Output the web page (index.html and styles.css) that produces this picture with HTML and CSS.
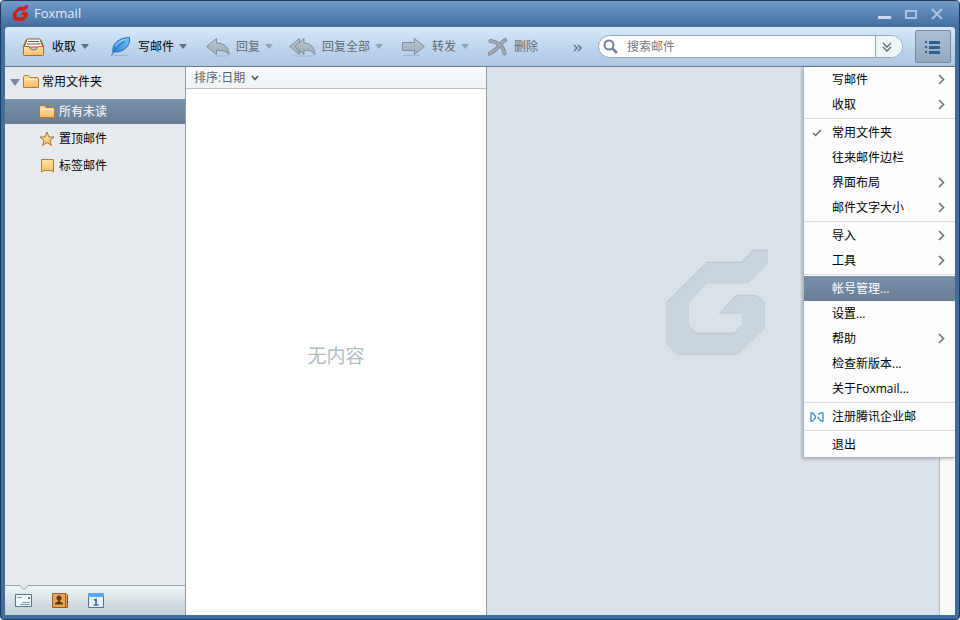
FILE: index.html
```html
<!DOCTYPE html>
<html lang="zh-CN">
<head>
<meta charset="utf-8">
<meta name="viewport" content="width=device-width, initial-scale=1">
<title>Foxmail</title>
<link rel="stylesheet" href="styles.css">
</head>
<body>
<svg class="defs" width="0" height="0" aria-hidden="true">
  <defs>
    <linearGradient id="gold" x1="0" y1="0" x2="0" y2="1"><stop offset="0" stop-color="#ffe2a8"/><stop offset="1" stop-color="#f5bd68"/></linearGradient>
    <linearGradient id="grey" x1="0" y1="0" x2="0" y2="1"><stop offset="0" stop-color="#b9c6cf"/><stop offset="1" stop-color="#9dacb8"/></linearGradient>
    <linearGradient id="blue" x1="1" y1="0" x2="0" y2="1"><stop offset="0" stop-color="#7cc4f8"/><stop offset="1" stop-color="#2f85d8"/></linearGradient>
    <symbol id="folder" viewBox="0 0 16 14"><path d="M.5 12.500V2.500Q.5.5 2 .5H5.500L7 2.500H14Q15.500 2.500 15.500 4V12.500Z" fill="url(#gold)" stroke="#b87830"/><path d="M1.500 4.500H14.500" stroke="#ffefc8"/></symbol>
    <symbol id="arrow" viewBox="0 0 7 11"><path d="M1 1L5.500 5.500L1 10" fill="none" stroke="#70757a" stroke-width="1.700"/></symbol>
  </defs>
</svg>
<div class="window">
  <header class="titlebar">
    <svg class="logo" width="15" height="16" viewBox="74 56 311 323"><path fill="#d81e10" stroke="#d81e10" stroke-width="12" d="M200 97H303L338 61H381V103L323 161H200L144 217V286L168 310H280L306 285V252H234L288 196H346L372 217V296L292 375H111L78 342V217Z"/></svg>
    <h1 class="app-name">Foxmail</h1>
    <div class="controls">
      <button type="button" aria-label="最小化"><svg width="14" height="12" viewBox="0 0 14 12"><path d="M1 9.500H14" stroke="#c6d9ee" stroke-width="3"/></svg></button>
      <button type="button" aria-label="最大化"><svg width="12" height="12" viewBox="0 0 12 12"><path d="M1 3H11V10H1Z" fill="none" stroke="#a9c4e2" stroke-width="2"/></svg></button>
      <button type="button" aria-label="关闭"><svg width="12" height="12" viewBox="0 0 12 12"><path d="M1 1L11 11M11 1L1 11" stroke="#a9c4e2" stroke-width="2"/></svg></button>
    </div>
  </header>

  <div class="client">
    <div class="toolbar">
      <div class="tools">
        <button type="button" class="tool">
          <svg width="24" height="20" viewBox="0 0 24 20"><path d="M5 2H18L21 10H2Z" fill="#fff" stroke="#8a5a35"/><path d="M6 4.500H17M5 7H18.500" stroke="#79503a"/><path d="M1.500 9.500L4.500 3M21.500 9.500L18.500 3" stroke="#9a6534" stroke-width="1.500"/><path d="M1.500 9.500H7Q8 13 11.500 13T16 9.500H21.500V17.500Q21.500 18.500 20.500 18.500H2.500Q1.500 18.500 1.500 17.500Z" fill="url(#gold)" stroke="#a96b2c"/></svg>
          <span>收取</span><i class="caret"></i>
        </button>
        <button type="button" class="tool">
          <svg width="24" height="20" viewBox="0 0 24 20"><path d="M5 18.500H20" stroke="#8aa6c4" opacity=".6"/><path d="M5 15C4 9 8 1 21.500.5C22.500 7 18 14 9 15L6.500 15Z" fill="url(#blue)" stroke="#2470b8"/><path d="M17 4.500Q9 8 3.500 18.500" fill="none" stroke="#1d5fa8"/><path d="M7.500 9Q10 4 17 2.500" fill="none" stroke="#a2d6fa"/></svg>
          <span>写邮件</span><i class="caret"></i>
        </button>
        <button type="button" class="tool" disabled>
          <svg width="24" height="20" viewBox="0 0 24 20"><path d="M6 19H22" stroke="#8fa2b5" opacity=".5"/><path d="M.7 9.500L10.500 1.500V6C19 6 22.500 11 23 17.500C20 14 16 13 10.500 13.500V17.500Z" fill="url(#grey)" stroke="#818d98"/></svg>
          <span>回复</span><i class="caret"></i>
        </button>
        <button type="button" class="tool" disabled>
          <svg class="wide" width="28" height="20" viewBox="0 0 28 20"><path d="M5 19H26" stroke="#8fa2b5" opacity=".5"/><path d="M1.700 9.500L11.500 1.500V17.500Z" fill="url(#grey)" stroke="#818d98"/><path d="M6.700 9.500L16 1.500V6C23 6 26.500 11 27 17.500C24 14 21 13 16 13.500V17.500Z" fill="url(#grey)" stroke="#818d98"/></svg>
          <span>回复全部</span><i class="caret"></i>
        </button>
        <button type="button" class="tool" disabled>
          <svg width="24" height="20" viewBox="0 0 24 20"><path d="M1 18.500H18" stroke="#8fa2b5" opacity=".5"/><path d="M.5 5.500H12.500V1.500L22.500 9.500L12.500 17.500V13.500H.5Z" fill="url(#grey)" stroke="#818d98"/></svg>
          <span>转发</span><i class="caret"></i>
        </button>
        <button type="button" class="tool" disabled>
          <svg width="20" height="20" viewBox="0 0 20 20" fill="none" stroke-linecap="round"><path d="M2.500 4C9 5 15.500 9 16.500 16.500M17 3C13 5 10 13 1.500 16.500" stroke="#7d8993" stroke-width="4"/><path d="M2.500 4C9 5 15.500 9 16.500 16.500M17 3C13 5 10 13 1.500 16.500" stroke="#9daab4" stroke-width="2.400"/></svg>
          <span>删除</span>
        </button>
      </div>
      <button type="button" class="more" aria-label="更多"><svg width="10" height="8" viewBox="0 0 10 8"><path d="M1 1L4 4L1 7M5 1L8 4L5 7" fill="none" stroke="#66778e" stroke-width="1.500"/></svg></button>
      <form class="search" role="search">
        <label for="q" aria-label="搜索邮件"><svg width="16" height="16" viewBox="0 0 16 16"><circle cx="6" cy="6" r="4.500" fill="none" stroke="#71829f" stroke-width="2"/><path d="M9.500 9.500L14 14" stroke="#71829f" stroke-width="2.500"/></svg></label>
        <input id="q" type="text" placeholder="搜索邮件">
        <button type="button" aria-label="搜索选项"><svg width="10" height="10" viewBox="0 0 10 10"><path d="M1 1L5 5L9 1M1 5L5 9L9 5" fill="none" stroke="#626a70" stroke-width="1.300"/></svg></button>
      </form>
      <div class="menu-anchor">
        <button type="button" class="menu-button" aria-label="主菜单" aria-expanded="true"><svg width="16" height="13" viewBox="0 0 16 13" fill="#315f8f"><path d="M0 0H2V2H0ZM4 0H15V3H4ZM0 5H2V7H0ZM4 5H15V8H4ZM0 10H2V12H0ZM4 10H15V13H4Z"/></svg></button>
        <div class="menu" role="menu">
          <button type="button" role="menuitem"><span>写邮件</span><svg class="sub" width="7" height="11"><use href="#arrow"/></svg></button>
          <button type="button" role="menuitem"><span>收取</span><svg class="sub" width="7" height="11"><use href="#arrow"/></svg></button>
          <hr>
          <button type="button" role="menuitemcheckbox" aria-checked="true"><svg class="mark" width="10" height="8" viewBox="0 0 10 8"><path d="M1 4L3.500 6.500L9 1" fill="none" stroke="#666b70" stroke-width="1.500"/></svg><span>常用文件夹</span></button>
          <button type="button" role="menuitem"><span>往来邮件边栏</span></button>
          <button type="button" role="menuitem"><span>界面布局</span><svg class="sub" width="7" height="11"><use href="#arrow"/></svg></button>
          <button type="button" role="menuitem"><span>邮件文字大小</span><svg class="sub" width="7" height="11"><use href="#arrow"/></svg></button>
          <hr>
          <button type="button" role="menuitem"><span>导入</span><svg class="sub" width="7" height="11"><use href="#arrow"/></svg></button>
          <button type="button" role="menuitem"><span>工具</span><svg class="sub" width="7" height="11"><use href="#arrow"/></svg></button>
          <hr>
          <button type="button" role="menuitem" class="active"><span>帐号管理...</span></button>
          <button type="button" role="menuitem"><span>设置...</span></button>
          <button type="button" role="menuitem"><span>帮助</span><svg class="sub" width="7" height="11"><use href="#arrow"/></svg></button>
          <button type="button" role="menuitem"><span>检查新版本...</span></button>
          <button type="button" role="menuitem"><span>关于Foxmail...</span></button>
          <hr>
          <button type="button" role="menuitem"><svg class="mark" width="14" height="10" viewBox="0 0 14 10"><path d="M3.500 9H1V1H2.500L5.500 4.500V5.500L3.500 8M8 2.500L10.500 1H13V9H11L8 5.500V4.500" fill="none" stroke="#3b94dc" stroke-width="1.400"/></svg><span>注册腾讯企业邮</span></button>
          <hr>
          <button type="button" role="menuitem"><span>退出</span></button>
        </div>
      </div>
    </div>

    <main class="panes">
      <aside class="sidebar">
        <nav class="folders">
          <a href="#common" class="group"><i class="triangle"></i><svg width="16" height="14"><use href="#folder"/></svg>常用文件夹</a>
          <a href="#unread" class="folder selected"><svg width="16" height="14"><use href="#folder"/></svg>所有未读</a>
          <a href="#pinned" class="folder"><svg width="16" height="16" viewBox="0 0 16 16"><path d="M8 1L10 6H15L11 9.500L12.500 14.500L8 11.500L3.500 14.500L5 9.500L1 6H6Z" fill="url(#gold)" stroke="#a8702f"/></svg>置顶邮件</a>
          <a href="#tags" class="folder"><svg width="16" height="16" viewBox="0 0 16 16"><path d="M2.500 1.500H14.500V14L12 12.500H5L2.500 14Z" fill="url(#gold)" stroke="#b87830"/></svg>标签邮件</a>
        </nav>
        <div class="switcher">
          <svg class="notch" width="10" height="5" viewBox="0 0 10 5"><path d="M0 0L5 4.500L10 0" fill="#e5eaee" stroke="#94a5b0"/></svg>
          <button type="button" aria-label="邮件"><svg width="18" height="16" viewBox="0 0 18 16"><path d="M.5 1.500H16.500V13.500H.5Z" fill="#f2f7fb" stroke="#547292"/><path d="M2 4.500H7M7 9.500H15M5 11.500H15" stroke="#7f98b1"/><path d="M13 4H15V6H13Z" fill="#547292"/></svg></button>
          <button type="button" aria-label="联系人"><svg width="18" height="16" viewBox="0 0 18 16"><path d="M1.500.5H15L16.500 2V14.500H1.500Z" fill="#e8a552" stroke="#965c24"/><path d="M14.500 1V14" stroke="#965c24"/><path d="M16 5H17M16 9H17" stroke="#5e3513" stroke-width="2"/><circle cx="8" cy="5" r="2.500" fill="#613814"/><path d="M4 11.500V10L7 8.500V7H9V8.500L12 10V11.500Z" fill="#613814"/></svg></button>
          <button type="button" aria-label="日历"><svg width="18" height="16" viewBox="0 0 18 16"><path d="M1.500.5H16.500V14.500H1.500Z" fill="#e9f2f9" stroke="#4677a5"/><path d="M1 0H17V4H1Z" fill="#58a8f2"/><path d="M7 7L9 6.500V12M6.500 12H11.500" fill="none" stroke="#3c6d9d" stroke-width="1.700"/></svg></button>
        </div>
      </aside>
      <section class="list">
        <button type="button" class="sort">排序:日期 <svg width="8" height="6" viewBox="0 0 8 6"><path d="M1 1L4 4.500L7 1" fill="none" stroke="#505960" stroke-width="1.600"/></svg></button>
        <p class="empty">无内容</p>
      </section>
      <section class="preview">
        <svg width="102" height="106" viewBox="78 58 303 318"><path fill="#b6c5ce" d="M200 96H303L338 60H381V103L323 161H200L144 217V286L168 309H280L306 285V252H234L288 195H346L372 217V296L292 375H111L78 342V217Z"/><path fill="#c9d4dc" d="M200 99H304L339 63H381V103L323 161H200L144 217V286L168 312H280L306 287V252H236L289 198H345L372 220V296L292 375H111L78 342V220Z"/></svg>
      </section>
      <div class="edge"></div>
    </main>
  </div>
</div>
</body>
</html>
```
FILE: styles.css
```css
* { box-sizing: border-box; }

body {
  margin: 0;
  height: 100vh;
  background: #fff;
  color: #000;
  font: 12px/18px "Open Sans", "Noto Sans CJK SC", sans-serif;
}

button, input { font: inherit; color: inherit; }
button { border: 0; padding: 0; background: none; }
svg { display: block; flex: none; }
a { color: inherit; text-decoration: none; }
.defs { position: absolute; }

.window {
  display: flex;
  flex-direction: column;
  height: 100%;
  border: 1px solid #1e3a5c;
  border-radius: 4px;
  background: #426d9f;
  overflow: hidden;
}

.titlebar {
  display: flex;
  align-items: center;
  height: 26px;
  padding: 0 16px 2px 12px;
  background: linear-gradient(#729bc8, #426d9f);
}
.app-name {
  flex: 1;
  margin: 0 0 0 6px;
  color: #e3edf8;
  font-size: 13px;
  font-weight: 400;
}
.controls { display: flex; gap: 14px; padding-top: 2px; }

.client {
  flex: 1;
  display: flex;
  flex-direction: column;
  min-height: 0;
  margin: 0 4px 4px;
}

.toolbar {
  display: flex;
  align-items: center;
  height: 40px;
  padding: 0 4px 0 17px;
  border-bottom: 1px solid #65798f;
  border-radius: 3px 3px 0 0;
  background: linear-gradient(#d8eafb, #bcd4ec 55%, #b0c7e0);
}
.tools { display: flex; gap: 19px; }
.tool { display: flex; align-items: center; white-space: nowrap; }
.tool span { margin-left: 6px; }
.tool:disabled { color: #626a72; }
.tool .wide { margin-left: -4px; }
.caret {
  margin-left: 5px;
  border: 4px solid transparent;
  border-top: 5px solid #5c7087;
  border-bottom: 0;
}
.tool:disabled .caret { border-top-color: #8fa3b9; }
.more { margin: 2px 15px 0 auto; }

.search {
  display: flex;
  align-items: center;
  flex: 0 1 305px;
  height: 23px;
  border: 1px solid #91a7b9;
  border-radius: 12px;
  background: #fff;
  overflow: hidden;
}
.search label { margin-left: 4px; }
.search input {
  flex: 1;
  min-width: 0;
  padding: 0 0 0 8px;
  border: 0;
  outline: 0;
  background: none;
}
.search input::placeholder { color: #777; opacity: 1; }
.search button {
  display: flex;
  align-items: center;
  height: 100%;
  padding: 0 10px 0 6px;
  border-left: 1px solid #91a7b9;
  background: #edf5f8;
}

.menu-anchor { position: relative; margin-left: 12px; }
.menu-button {
  display: flex;
  align-items: center;
  justify-content: center;
  width: 36px;
  height: 33px;
  padding-top: 2px;
  border: 1px solid #6f8da9;
  border-radius: 2px;
  background: linear-gradient(#abc0d5, #94a9bd);
}
.menu {
  position: absolute;
  z-index: 1;
  top: 37px;
  right: -4px;
  width: 152px;
  border: 1px solid #b1b7bc;
  border-width: 0 0 1px 1px;
  background: #fdfdfd;
  box-shadow: -1px 1px 3px #0004;
}
.menu button {
  position: relative;
  display: flex;
  align-items: center;
  width: 100%;
  height: 25px;
  padding: 0 10px 0 28px;
  white-space: nowrap;
}
.menu .sub { margin-left: auto; }
.menu .mark { position: absolute; left: 6px; }
.menu [aria-checked] .mark { left: 8px; }
.menu .active { color: #fff; background: linear-gradient(#7892ab, #687e95); }
.menu hr { height: 1px; margin: 1px 0; border: 0; background: #dadddf; }

.panes { flex: 1; display: flex; min-height: 0; }

.sidebar {
  display: flex;
  flex-direction: column;
  flex: 0 0 181px;
  border-right: 1px solid #949ca5;
  background: #e5eaee;
}
.folders { flex: 1; display: flex; flex-direction: column; gap: 2px; }
.folders a { display: flex; align-items: center; gap: 4px; }
.group { height: 30px; padding-left: 5px; }
.triangle {
  border: 5px solid transparent;
  border-top: 7px solid #7c88a1;
  border-bottom: 0;
}
.folders .group { gap: 3px; }
.folder { height: 25px; padding-left: 34px; }
.selected { color: #fff; background: linear-gradient(#7892ab, #687e95); }

.switcher {
  position: relative;
  display: flex;
  align-items: center;
  gap: 18px;
  height: 30px;
  padding-left: 10px;
  border-top: 1px solid #94a5b0;
  background: linear-gradient(#eef4f6, #c3cfd7);
}
.notch { position: absolute; top: -1px; left: 14px; }

.list {
  display: flex;
  flex-direction: column;
  flex: 0 0 301px;
  border-right: 1px solid #949ca5;
  background: #fff;
}
.sort {
  display: flex;
  align-items: center;
  gap: 6px;
  height: 22px;
  padding-left: 8px;
  border-bottom: 1px solid #b8bec3;
  background: linear-gradient(#f8fafc, #eff3f6);
  color: #59636a;
}
.empty {
  margin: auto;
  padding-top: 8px;
  color: #aebdc3;
  font-size: 19px;
  line-height: 28px;
}

.preview {
  flex: 1;
  display: flex;
  align-items: center;
  justify-content: center;
  padding: 0 0 78px 8px;
  background: #dae1e8;
}
.edge { flex: 0 0 16px; border-left: 1px solid #b4bbc1; background: #f9fbfb; }
```
